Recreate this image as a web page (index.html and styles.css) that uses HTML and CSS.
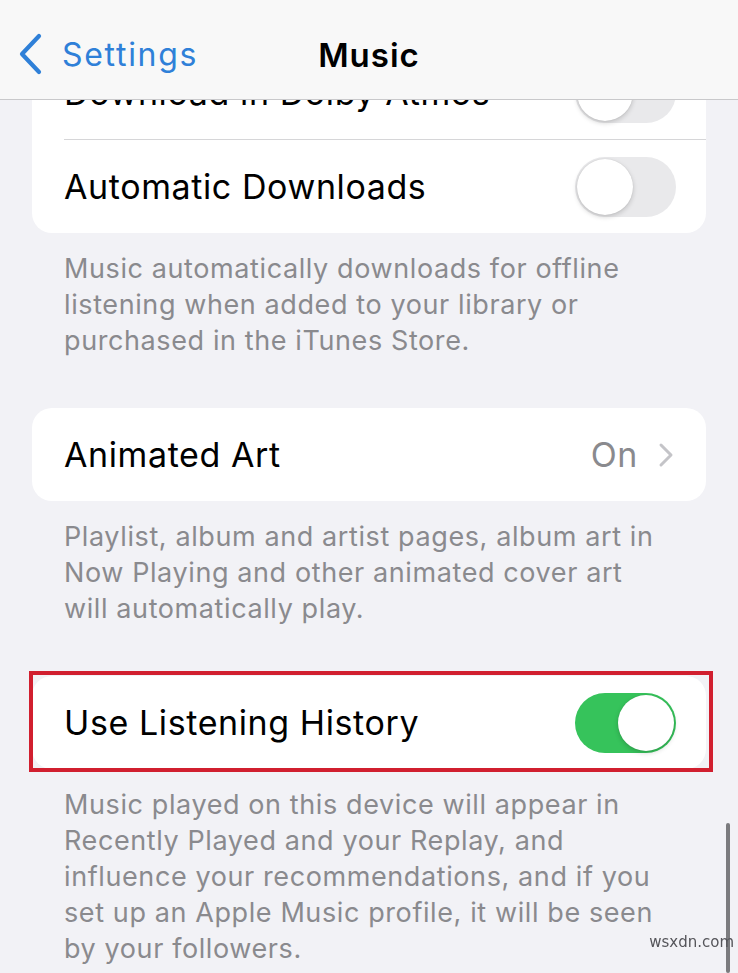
FILE: index.html
```html
<!DOCTYPE html>
<html lang="en">
<head>
    <meta charset="UTF-8">
    <meta name="viewport" content="width=device-width, initial-scale=1.0">
    <title>Music</title>
    <link rel="stylesheet" href="styles.css">
</head>
<body>
    <div class="navbar">
        <div class="back">
            <svg class="chevron-back" width="28" height="42" viewBox="0 0 28 42">
                <path d="M23 3 L6 21 L23 39" fill="none" stroke="#2f80d8" stroke-width="4.2" stroke-linecap="round" stroke-linejoin="round"/>
            </svg>
            <span class="back-label">Settings</span>
        </div>
        <div class="nav-title">Music</div>
    </div>

    <div class="content">
        <div class="group">
            <div class="card">
                <div class="row">
                    <span class="label">Download in Dolby Atmos</span>
                    <span class="toggle"></span>
                </div>
                <div class="row">
                    <span class="label">Automatic Downloads</span>
                    <span class="toggle"></span>
                </div>
            </div>
            <p class="footer">Music automatically downloads for offline listening when added to your library or purchased in the iTunes Store.</p>
        </div>

        <div class="group">
            <div class="card">
                <div class="row">
                    <span class="label">Animated Art</span>
                    <span class="value">On
                        <svg class="chevron" width="16" height="26" viewBox="0 0 16 26">
                            <path d="M3 3 L13 13 L3 23" fill="none" stroke="#c4c4c8" stroke-width="3" stroke-linecap="round" stroke-linejoin="round"/>
                        </svg>
                    </span>
                </div>
            </div>
            <p class="footer">Playlist, album and artist pages, album art in Now Playing and other animated cover art will automatically play.</p>
        </div>

        <div class="group">
            <div class="card highlighted">
                <div class="row">
                    <span class="label">Use Listening History</span>
                    <span class="toggle on"></span>
                </div>
            </div>
            <p class="footer">Music played on this device will appear in Recently Played and your Replay, and influence your recommendations, and if you set up an Apple Music profile, it will be seen by your followers.</p>
        </div>
    </div>

    <div class="scrollbar"></div>
    <div class="watermark">wsxdn.com</div>
</body>
</html>
```

FILE: styles.css
```css
body, html {
    margin: 0;
    height: 100%;
    overflow: hidden;
    background-color: #f2f2f6;
    font-family: Inter, "Noto Sans", sans-serif;
}

.navbar {
    position: fixed;
    top: 0;
    left: 0;
    right: 0;
    height: 99px;
    background-color: #f8f8f8;
    border-bottom: 1px solid #c9c9cb;
    z-index: 5;
}

.back {
    position: absolute;
    left: 16px;
    top: 33px;
    display: flex;
    align-items: center;
    gap: 18px;
}

.back-label {
    color: #2f80d8;
    font-size: 32px;
    letter-spacing: 1.7px;
}

.nav-title {
    text-align: center;
    padding-top: 35px;
    font-size: 33px;
    font-weight: 600;
    letter-spacing: 1px;
    color: #000;
}

.content {
    padding: 46px 32px 0 32px;
}

.group {
    padding-bottom: 49px;
}

.card {
    position: relative;
    background-color: #fff;
    border-radius: 20px;
}

.row {
    height: 93px;
    display: flex;
    align-items: center;
    justify-content: space-between;
    padding: 0 30px 0 32px;
}

.row + .row {
    border-top: 1px solid #d6d6d8;
    margin-left: 32px;
    padding-left: 0;
}

.label {
    font-size: 34px;
    letter-spacing: 0.6px;
    color: #000;
}

.value {
    display: flex;
    align-items: center;
    gap: 20px;
    font-size: 34px;
    letter-spacing: 0.6px;
    color: #8a8a8e;
    padding-right: 2px;
}

.toggle {
    position: relative;
    width: 101px;
    height: 60px;
    border-radius: 30px;
    background-color: #e9e9eb;
}

.toggle::after {
    content: "";
    position: absolute;
    top: 2px;
    left: 2px;
    width: 56px;
    height: 56px;
    border-radius: 50%;
    background-color: #fff;
    box-shadow: 0 2px 5px rgba(0, 0, 0, 0.18), 0 0 1px rgba(0, 0, 0, 0.15);
}

.toggle.on {
    background-color: #36c35b;
}

.toggle.on::after {
    left: 43px;
}

.highlighted::before {
    content: "";
    position: absolute;
    top: -5px;
    bottom: -3px;
    left: -3px;
    right: -7px;
    border: 4px solid #d11f2f;
}

.footer {
    margin: 0;
    padding: 18px 32px 0 32px;
    font-size: 27px;
    letter-spacing: 0.6px;
    line-height: 36px;
    color: #8a8a8e;
}

.scrollbar {
    position: fixed;
    right: 8px;
    top: 823px;
    bottom: 0;
    width: 4px;
    border-radius: 2px;
    background-color: #7b7b7e;
}

.watermark {
    position: fixed;
    right: 4px;
    bottom: 22px;
    font-size: 15px;
    color: #55555a;
    font-family: "DejaVu Sans", sans-serif;
}
```
